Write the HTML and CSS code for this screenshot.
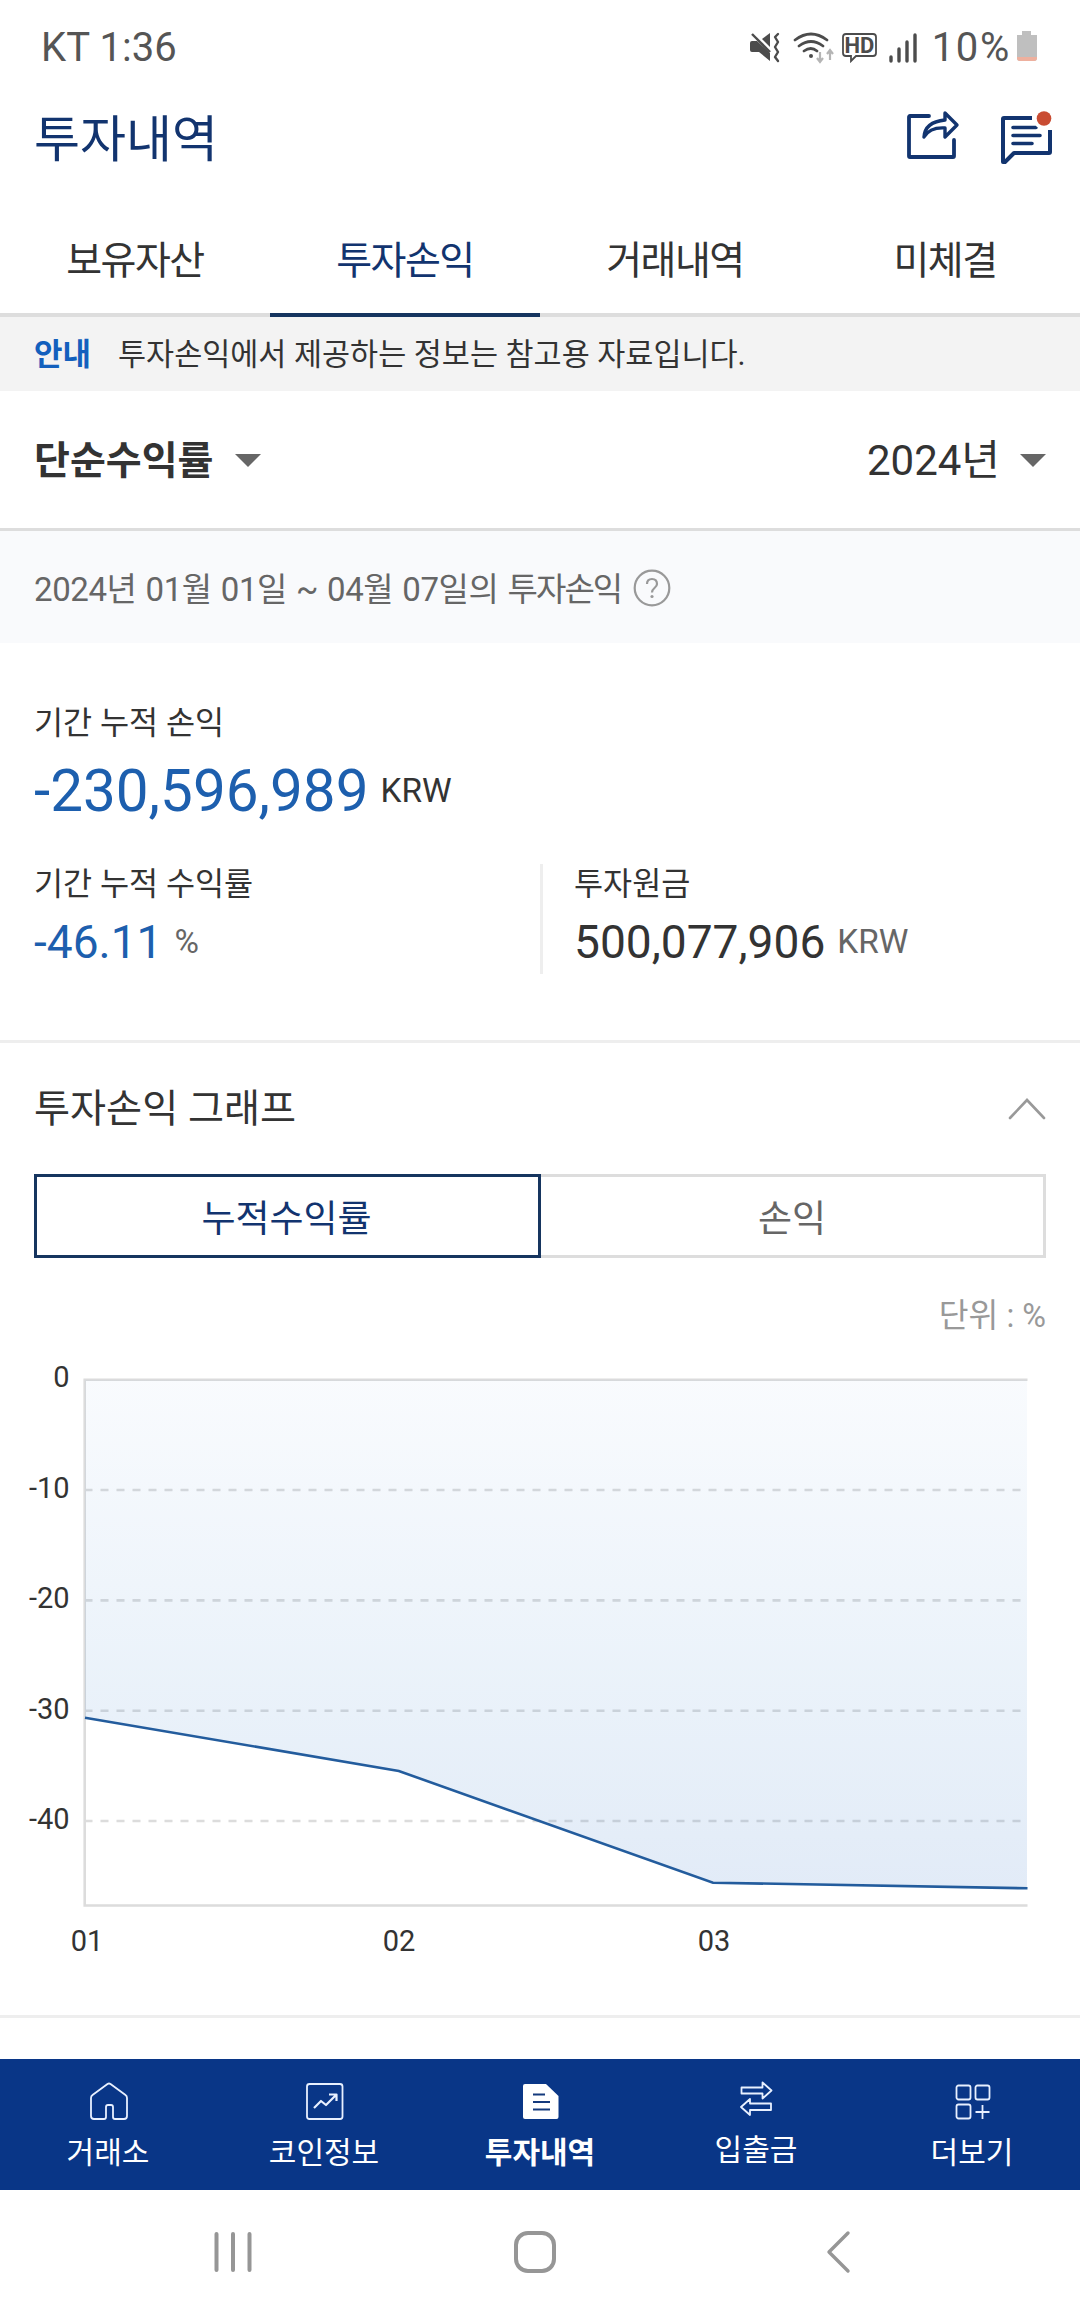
FILE: index.html
```html
<!DOCTYPE html>
<html lang="ko">
<head>
    <meta charset="UTF-8">
    <meta name="viewport" content="width=device-width, initial-scale=1.0">
    <title>투자내역</title>
    <link rel="stylesheet" href="styles.css">
</head>
<body>
    <div class="statusbar">
        <span class="carrier">KT 1:36</span>
        <svg class="status-icons" width="180" height="40" viewBox="745 26 180 40" fill="none" stroke="#4c4c4c">
            <!-- mute / vibrate -->
            <path d="M750 42q0-2 2-2h5l13 12v8l-11-9h-7q-2 0-2-2z" fill="#4c4c4c" stroke="none"/>
            <path d="M762 38l8-6v14z" fill="#4c4c4c" stroke="none"/>
            <path d="M752 33l18 18" stroke-width="2.4"/>
            <path d="M778 33l-3 3 3 5-3 5 3 5-3 5 3 4" stroke-width="2.4" stroke-linecap="round" stroke-linejoin="round"/>
            <!-- wifi -->
            <path d="M795 39q16-12 32 0M799 45q12-9 24 0M804 50q7-5 13 0" stroke-width="2.7" stroke-linecap="round"/>
            <circle cx="811" cy="55" r="2" fill="#4c4c4c" stroke="none"/>
            <path d="M820 51v10M817 57l3 4 3-4M830 59V49M827 53l3-4 3 4" stroke="#b5b5b5" stroke-width="2.2"/>
            <!-- HD voice -->
            <path d="M846 33h27q3 0 3 3v16q0 3-3 3h-17l-5 5v-5h-5q-3 0-3-3v-16q0-3 3-3z" stroke-width="1.8"/>
            <text x="859.5" y="52" class="hd">HD</text>
            <!-- signal -->
            <path d="M891 56v4M899 48v12M907 41v19M915 34v26" stroke-width="3.4" stroke-linecap="round"/>
        </svg>
        <span class="percent">10%</span>
        <svg class="battery" width="22" height="32" viewBox="0 0 22 32">
            <path d="M6 1h9v4h6v23q0 3-3 3H4q-3 0-3-3V5h5z" fill="#bfbfbf"/>
            <path d="M1 27h20v1q0 3-3 3H4q-3 0-3-3z" fill="#eeb09e"/>
        </svg>
    </div>

    <header class="header">
        <h1>투자내역</h1>
        <svg class="icon-share" width="54" height="54" viewBox="0 0 54 54" fill="none" stroke="#12346f" stroke-width="3.8" stroke-linejoin="round" stroke-linecap="round">
            <path d="M23 7H4q-1 0-1 1v39q0 1 1 1h43q1 0 1-1V31"/>
            <path d="M39 4l12 12-12 12v-9q-15-1-21 9 1-15 21-17z" stroke-width="3.4"/>
        </svg>
        <svg class="icon-chat" width="54" height="56" viewBox="0 0 54 56" fill="none" stroke="#12346f" stroke-width="4" stroke-linejoin="round">
            <path d="M32 8H4q-1 0-1 1v43h2l9-9h35q1 0 1-1V20"/>
            <path d="M13 17.500h23M13 25.500h27M13 33.500h19" stroke-width="3.6" stroke-linecap="round"/>
            <circle cx="44" cy="9" r="10.500" fill="#fff" stroke="none"/>
            <circle cx="44" cy="8.500" r="7.300" fill="#c94c32" stroke="none"/>
        </svg>
    </header>

    <nav class="tabs">
        <a>보유자산</a>
        <a class="on">투자손익</a>
        <a>거래내역</a>
        <a>미체결</a>
    </nav>

    <div class="notice"><b>안내</b><span>투자손익에서 제공하는 정보는 참고용 자료입니다.</span></div>

    <div class="filter">
        <div class="select method">단순수익률<i class="caret"></i></div>
        <div class="select year">2024년<i class="caret"></i></div>
    </div>

    <div class="period">
        <div>2024년 01월 01일 ~ 04월 07일의 <span>투자손익</span></div>
        <svg width="38" height="38" viewBox="0 0 38 38" fill="none" stroke="#999" stroke-width="2.2">
            <circle cx="19" cy="19" r="17.300"/>
            <path d="M14 15q0-5 5-5t5 5q0 2-2.500 4t-2.500 4.500" />
            <circle cx="19" cy="27.500" r="1.600" fill="#999" stroke="none"/>
        </svg>
    </div>

    <section class="summary">
        <div class="label">기간 누적 손익</div>
        <div class="total"><span class="blue">-230,596,989</span><em>KRW</em></div>
        <div class="split">
            <div class="col">
                <div class="label">기간 누적 수익률</div>
                <div class="value"><span class="blue">-46.11</span><em>%</em></div>
            </div>
            <div class="col principal">
                <div class="label">투자원금</div>
                <div class="value"><span>500,077,906</span><em>KRW</em></div>
            </div>
        </div>
    </section>

    <section class="graph">
        <div class="graph-title">
            <h2>투자손익 그래프</h2>
            <svg width="38" height="24" viewBox="0 0 38 24" fill="none" stroke="#999" stroke-width="2.6" stroke-linecap="round">
                <path d="M2 21L19 3l17 18"/>
            </svg>
        </div>
        <div class="segment">
            <button class="on">누적수익률</button>
            <button>손익</button>
        </div>
        <div class="unit">단위 : %</div>
        <svg class="chart" width="1080" height="675" viewBox="0 0 1080 675">
            <defs>
                <linearGradient id="area" x1="0" y1="0" x2="0" y2="1">
                    <stop offset="0" stop-color="#2f78d0" stop-opacity="0.03"/>
                    <stop offset="0.55" stop-color="#2376c8" stop-opacity="0.09"/>
                    <stop offset="1" stop-color="#1f66c4" stop-opacity="0.13"/>
                </linearGradient>
            </defs>
            <g class="grid">
                <path d="M84.500 150H1027M84.500 260.400H1027M84.500 370.700H1027M84.500 481H1027" stroke-dasharray="8 8"/>
                <path d="M1027.500 39.700H84.700V565.500H1027.500"/>
            </g>
            <path d="M85 39.700V377.700L398.800 431 713 542.700 1027 548.300V39.700z" fill="url(#area)"/>
            <path class="line" d="M85 377.700L398.800 431 713 542.700 1027.500 548.300"/>
            <g class="axis-y">
                <text x="69.500" y="47">0</text>
                <text x="69.500" y="157.500">-10</text>
                <text x="69.500" y="268">-20</text>
                <text x="69.500" y="378.500">-30</text>
                <text x="69.500" y="488.500">-40</text>
            </g>
            <g class="axis-x">
                <text x="87" y="611">01</text>
                <text x="399" y="611">02</text>
                <text x="714" y="611">03</text>
            </g>
        </svg>
    </section>

    <nav class="bottom">
        <a>
            <svg viewBox="0 0 40 40"><path d="M2 17q0-2 1.500-3L18.500 3q1.500-1 3 0l15 11q1.500 1 1.500 3v18q0 3-3 3h-9q-2 0-2-2V26q0-2-2-2h-3q-2 0-2 2v10q0 2-2 2H5q-3 0-3-3z"/></svg>
            거래소
        </a>
        <a>
            <svg viewBox="0 0 40 40"><rect x="2" y="3" width="35.500" height="35" rx="2.500"/><path d="M9 27l7-7 5 4 10-10M24 13.500h7.500V20" stroke-width="2.200"/></svg>
            코인정보
        </a>
        <a class="on">
            <svg viewBox="0 0 40 40"><path d="M4 3h21l12.500 12v21q0 2-2 2H4q-2 0-2-2V5q0-2 2-2z" fill="#fff"/><path d="M12 13.500h12M12 21h17M12 28.500h17" stroke="#143a7d" stroke-width="2.200"/></svg>
            투자내역
        </a>
        <a class="transfer">
            <svg viewBox="0 0 40 40"><path d="M4.500 9.500h21V4.500l9 8-9 8v-5h-21v-6zM34 25.500H13v-4.500l-9 8 9 8v-5h21z"/></svg>
            입출금
        </a>
        <a>
            <svg viewBox="0 0 40 40"><rect x="3.500" y="4.500" width="14" height="14" rx="2"/><rect x="22.500" y="4.500" width="14" height="14" rx="2"/><rect x="3.500" y="23.500" width="14" height="14" rx="2"/><path d="M29.500 24v14M22.500 31h14"/></svg>
            더보기
        </a>
    </nav>

    <div class="sysbar">
        <svg width="40" height="44" viewBox="0 0 40 44"><path d="M3.500 4v36M20 4v36M36.500 4v36"/></svg>
        <svg class="home" width="44" height="44" viewBox="0 0 44 44"><rect x="3" y="3" width="38" height="38" rx="12"/></svg>
        <svg width="26" height="44" viewBox="0 0 26 44"><path d="M23 3L4 22l19 19" stroke-width="3.400"/></svg>
    </div>
</body>
</html>
```
FILE: styles.css
```css
*{
    box-sizing: border-box;
}
body{
    margin: 0;
    width: 1080px;
    background: #fff;
    color: #333;
    font-family: Roboto, "Noto Sans CJK KR", sans-serif;
}
h1, h2{
    margin: 0;
    font-weight: 400;
}
em, i{
    font-style: normal;
}

/* status bar */
.statusbar{
    height: 92px;
    padding: 2px 42px 0 41px;
    display: flex;
    align-items: center;
    font-size: 40px;
    color: #555;
}
.carrier{
    letter-spacing: 0.1px;
}
.status-icons{
    margin-left: auto;
    margin-bottom: 1px;
}
.hd{
    font-size: 22px;
    font-weight: 700;
    text-anchor: middle;
    fill: #4c4c4c;
    stroke: none;
}
.percent{
    margin-left: 7px;
    letter-spacing: 1.7px;
}
.battery{
    margin-left: 5px;
    margin-bottom: 2px;
}

.header{
    height: 95px;
    padding: 0 26px 0 34px;
    display: flex;
    align-items: center;
}
.header h1{
    padding-top: 1px;
    font-size: 50px;
    line-height: 95px;
    color: #12346f;
    margin-right: auto;
}
.icon-share{
    margin-right: 40px;
    margin-bottom: 7px;
}
.icon-chat{
    margin-bottom: 4px;
}

.tabs{
    display: flex;
    height: 130px;
}
.tabs a{
    flex: 1;
    padding-top: 44px;
    text-align: center;
    font-size: 39px;
    line-height: 60px;
    letter-spacing: -1.5px;
    border-bottom: 4px solid #ddd;
}
.tabs a.on{
    color: #12346f;
    border-color: #16355f;
}

.notice{
    height: 74px;
    padding: 0 34px;
    line-height: 76px;
    font-size: 30.5px;
    background: #f3f3f3;
}
.notice b{
    color: #1360bd;
    font-size: 31px;
    margin-right: 27px;
}

.filter{
    height: 140px;
    padding: 2px 34px 0;
    display: flex;
    justify-content: space-between;
    align-items: center;
    border-bottom: 3px solid #ddd;
}
.select{
    display: flex;
    align-items: center;
    line-height: 60px;
}
.method{
    font-size: 39px;
    font-weight: 700;
}
.year{
    font-size: 42px;
}
.caret{
    margin-left: 22px;
    border: 13px solid transparent;
    border-top-color: #666;
    border-bottom: 0;
}
.year .caret{
    margin-left: 20px;
}

.period{
    height: 112px;
    padding: 0 34px;
    display: flex;
    align-items: center;
    background: #f9fafc;
    color: #666;
    font-size: 33px;
    letter-spacing: -0.4px;
    word-spacing: 1.2px;
}
.period span{
    letter-spacing: -1.9px;
}
.period svg{
    margin-left: 12px;
    margin-top: 2px;
}

/* profit summary */
.summary{
    height: 400px;
    padding: 57px 34px 0;
    border-bottom: 3px solid #eee;
}
.label{
    font-size: 31.6px;
    line-height: 48px;
}
.total, .value{
    display: flex;
    align-items: center;
}
.total{
    margin-top: 7px;
    font-size: 58.4px;
    line-height: 70px;
}
.total em, .value em{
    font-size: 33.4px;
    margin-left: 12px;
    padding-top: 1px;
}
.blue{
    color: #1d5fae;
}
.split{
    margin-top: 38px;
    height: 110px;
    display: flex;
}
.col{
    width: 506px;
}
.principal{
    border-left: 3px solid #eee;
    padding-left: 31px;
}
.split .label{
    line-height: 42px;
}
.value{
    font-size: 46.1px;
    line-height: 70px;
}
.value em{
    color: #666;
}

/* graph */
.graph{
    padding-top: 36px;
    border-bottom: 3px solid #eee;
}
.graph-title{
    padding: 0 34px;
    height: 60px;
    display: flex;
    align-items: center;
    justify-content: space-between;
}
.graph-title h2{
    font-size: 39.2px;
    line-height: 60px;
}
.segment{
    margin: 35px 34px 0;
    height: 84px;
    display: flex;
}
.segment button{
    flex: 1;
    padding: 0;
    background: #fff;
    border: 3px solid #ddd;
    border-left: 0;
    font-family: inherit;
    font-size: 37px;
    color: #666;
}
.segment button.on{
    flex: 0 0 507px;
    padding-right: 2px;
    border: 3px solid #16355f;
    color: #12346f;
}
.unit{
    padding: 34px 34px 0;
    text-align: right;
    font-size: 32.4px;
    line-height: 48px;
    color: #999;
}
.chart{
    display: block;
}
.grid path{
    fill: none;
    stroke: #dcdcdc;
    stroke-width: 2.600;
}
.line{
    fill: none;
    stroke: #235c9d;
    stroke-width: 2.600;
}
.chart text{
    font-size: 29px;
    fill: #333;
}
.axis-y{
    text-anchor: end;
}
.axis-x{
    text-anchor: middle;
}

.bottom{
    margin-top: 41px;
    height: 131px;
    display: flex;
    background: #093687;
}
.bottom a{
    flex: 1;
    padding-top: 22px;
    display: flex;
    flex-direction: column;
    align-items: center;
    font-size: 30px;
    line-height: 44px;
    color: #fff;
}
.bottom svg{
    width: 40px;
    height: 40px;
    margin: 0 0 10px 2px;
    fill: none;
    stroke: #e8f0ff;
    stroke-width: 1.8;
    stroke-linejoin: round;
}
.bottom a.on{
    font-weight: 700;
}
.bottom a.on svg{
    stroke: none;
}
.bottom a.transfer{
    padding-top: 19px;
}

.sysbar{
    height: 124px;
    padding: 0 229px 0 213px;
    display: flex;
    justify-content: space-between;
    align-items: center;
}
.sysbar svg{
    fill: none;
    stroke: #969696;
    stroke-width: 4;
    stroke-linecap: round;
    stroke-linejoin: round;
}
.sysbar .home{
    margin-right: 8px;
}
```
